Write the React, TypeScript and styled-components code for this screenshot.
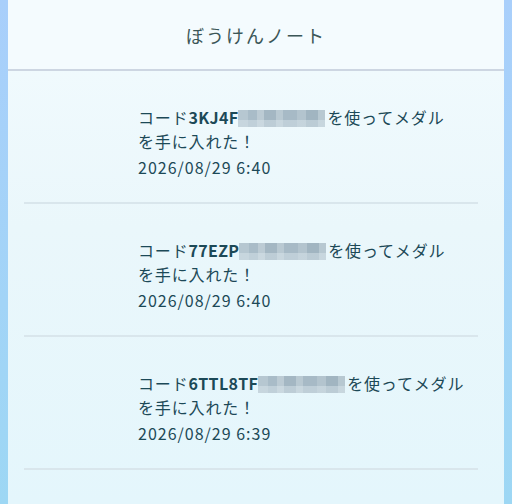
import React from "react";
import styled, { createGlobalStyle } from "styled-components";

const GlobalStyle = createGlobalStyle`
  html, body {
    margin: 0;
    padding: 0;
  }
  body {
    font-family: "Noto Sans CJK JP", "Noto Sans", sans-serif;
    background: linear-gradient(180deg, #a9cffb 0%, #a2d4f7 60%, #9dd7f4 100%);
  }
`;

const Frame = styled.div`
  width: 512px;
  height: 504px;
  padding: 0 8px;
  box-sizing: border-box;
  overflow: hidden;
`;

const Panel = styled.div`
  height: 100%;
  background: linear-gradient(180deg, #f3fbfe 0%, #eaf7fb 45%, #e4f6fc 100%);
  display: flex;
  flex-direction: column;
`;

const Header = styled.header`
  height: 69px;
  display: flex;
  align-items: center;
  justify-content: center;
  border-bottom: 2px solid #cdd6e2;
  background: #f4fbfe;
`;

const Title = styled.h1`
  margin: 0;
  font-size: 18px;
  font-weight: 400;
  letter-spacing: 2px;
  color: #3b5657;
`;

const List = styled.ul`
  list-style: none;
  margin: 0 26px 0 16px;
  padding: 0;
`;

const Row = styled.li`
  height: 133px;
  border-bottom: 2px solid #d9e6ec;
  display: flex;
  align-items: center;
  padding: 10px 0 0 114px;
  box-sizing: border-box;
`;

const Entry = styled.div`
  color: #1c4957;
  font-size: 16px;
  line-height: 24px;
`;

const Message = styled.p`
  margin: 0;
  letter-spacing: 0.85px;
`;

const Code = styled.span`
  font-weight: 700;
  letter-spacing: 0.3px;
`;

const Masked = styled.span`
  display: inline-block;
  width: 87px;
  height: 17px;
  vertical-align: -3px;
  margin-right: 2px;
  background:
    linear-gradient(180deg, rgba(255,255,255,0) 0%, rgba(255,255,255,0) 60%, rgba(220,232,238,0.45) 60%, rgba(220,232,238,0.45) 100%),
    linear-gradient(90deg,
      #b6c7d1 0 12%, #a9bcc8 12% 22%, #bccbd4 22% 30%, #a4b7c3 30% 44%,
      #b9c9d2 44% 52%, #a7bac6 52% 68%, #b3c4ce 68% 78%, #a1b5c1 78% 92%, #b7c8d1 92% 100%);
`;

const Stamp = styled.p`
  margin: 2px 0 0;
  letter-spacing: 1px;
`;

const entries = [
  { code: "3KJ4F", time: "2026/08/29 6:40" },
  { code: "77EZP", time: "2026/08/29 6:40" },
  { code: "6TTL8TF", time: "2026/08/29 6:39" },
];

export default function App() {
  return (
    <>
      <GlobalStyle />
      <Frame>
        <Panel>
          <Header>
            <Title>ぼうけんノート</Title>
          </Header>
          <List>
            {entries.map((e, i) => (
              <Row key={i}>
                <Entry>
                  <Message>
                    コード<Code>{e.code}</Code>
                    <Masked />
                    を使ってメダル
                    <br />
                    を手に入れた！
                  </Message>
                  <Stamp>{e.time}</Stamp>
                </Entry>
              </Row>
            ))}
          </List>
        </Panel>
      </Frame>
    </>
  );
}
